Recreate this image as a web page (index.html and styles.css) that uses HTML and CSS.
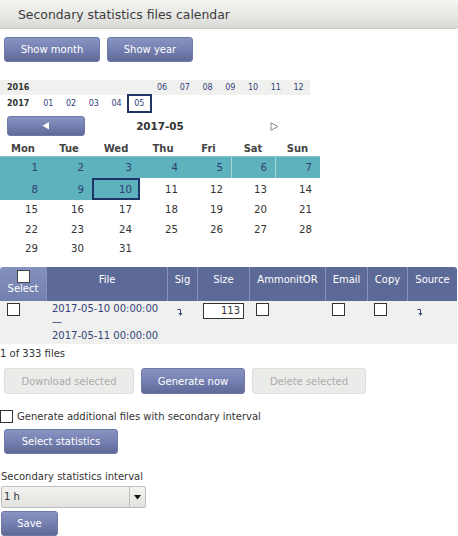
FILE: index.html
```html
<!DOCTYPE html>
<html lang="en">
<head>
<meta charset="utf-8">
<title>Secondary statistics files calendar</title>
<link rel="stylesheet" href="styles.css">
</head>
<body>
<div class="title">Secondary statistics files calendar</div>

<div class="view-btns">
  <button class="btn btn-month">Show month</button>
  <button class="btn btn-year">Show year</button>
</div>

<div class="months">
  <div class="mrow alt">
    <span class="yr">2016</span>
    <span></span><span></span><span></span><span></span><span></span>
    <a class="m">06</a><a class="m">07</a><a class="m">08</a><a class="m">09</a><a class="m">10</a><a class="m">11</a><a class="m">12</a>
  </div>
  <div class="mrow cur">
    <span class="yr">2017</span>
    <a class="m">01</a><a class="m">02</a><a class="m">03</a><a class="m">04</a><a class="m sel">05</a>
  </div>
</div>

<div class="nav">
  <div class="nav-cell"><button class="btn nav-btn"><svg width="8" height="8" viewBox="0 0 8 8"><polygon points="7,0 7,7.5 0.5,3.75" fill="#fff"/></svg></button></div>
  <div class="nav-title">2017-05</div>
  <div class="nav-cell"><svg width="9" height="9" viewBox="0 0 9 9"><polygon points="1,0.8 1,8.2 8,4.5" fill="none" stroke="#8a8a8a" stroke-width="1"/></svg></div>
</div>

<table class="cal">
  <colgroup><col class="c46"><col class="c46"><col class="c48"><col class="c46"><col class="c45"><col class="c44"><col class="c45"></colgroup>
  <thead>
    <tr><th>Mon</th><th>Tue</th><th>Wed</th><th>Thu</th><th>Fri</th><th>Sat</th><th>Sun</th></tr>
  </thead>
  <tbody>
    <tr class="r-tall first">
      <td class="has">1</td><td class="has">2</td><td class="has">3</td><td class="has">4</td><td class="has">5</td><td class="has sep">6</td><td class="has sep">7</td>
    </tr>
    <tr class="r-tall">
      <td class="has">8</td><td class="has">9</td><td class="has today">10</td><td>11</td><td>12</td><td>13</td><td>14</td>
    </tr>
    <tr class="r"><td>15</td><td>16</td><td>17</td><td>18</td><td>19</td><td>20</td><td>21</td></tr>
    <tr class="r"><td>22</td><td>23</td><td>24</td><td>25</td><td>26</td><td>27</td><td>28</td></tr>
    <tr class="r"><td>29</td><td>30</td><td>31</td><td></td><td></td><td></td><td></td></tr>
  </tbody>
</table>

<table class="ft">
  <colgroup>
    <col class="w-sel"><col class="w-file"><col class="w-sig"><col class="w-size"><col class="w-amm"><col class="w-mail"><col class="w-copy"><col class="w-src">
  </colgroup>
  <thead>
    <tr>
      <th class="th-sel"><input type="checkbox" class="cb cb-head"><div>Select</div></th>
      <th>File</th>
      <th>Sig</th>
      <th>Size</th>
      <th>AmmonitOR</th>
      <th>Email</th>
      <th>Copy</th>
      <th>Source</th>
    </tr>
  </thead>
  <tbody>
    <tr>
      <td class="td-cb"><input type="checkbox" class="cb"></td>
      <td class="td-file"><a>2017-05-10 00:00:00</a><br><a>—</a><br><a>2017-05-11 00:00:00</a></td>
      <td class="td-ico"><svg width="6" height="8" viewBox="0 0 6 8"><path d="M0.5 1.5 H3.5 V5.5" fill="none" stroke="#33427a" stroke-width="1"/><polygon points="1.5,5 5.5,5 3.5,7.8" fill="#33427a"/></svg></td>
      <td class="td-size"><input class="size" type="text" value="113"></td>
      <td class="td-cb"><input type="checkbox" class="cb"></td>
      <td class="td-cb"><input type="checkbox" class="cb"></td>
      <td class="td-cb"><input type="checkbox" class="cb"></td>
      <td class="td-ico"><svg width="6" height="8" viewBox="0 0 6 8"><path d="M0.5 1.5 H3.5 V5.5" fill="none" stroke="#33427a" stroke-width="1"/><polygon points="1.5,5 5.5,5 3.5,7.8" fill="#33427a"/></svg></td>
    </tr>
  </tbody>
</table>

<div class="count">1 of 333 files</div>

<div class="actions">
  <button class="btn btn-dis btn-dl" disabled>Download selected</button>
  <button class="btn btn-gen">Generate now</button>
  <button class="btn btn-dis btn-del" disabled>Delete selected</button>
</div>

<label class="check-row"><input type="checkbox" class="cb"><span>Generate additional files with secondary interval</span></label>

<button class="btn btn-stats">Select statistics</button>

<div class="field-label">Secondary statistics interval</div>
<div class="select"><span class="select-val">1 h</span><span class="select-arrow"><svg width="7" height="5" viewBox="0 0 7 5"><polygon points="0,0 7,0 3.5,4.5" fill="#111"/></svg></span></div>

<button class="btn btn-save">Save</button>
</body>
</html>
```

FILE: styles.css
```css
* { box-sizing: border-box; }

body {
  margin: 0;
  font-family: "DejaVu Sans", "Liberation Sans", sans-serif;
  font-size: 10px;
  color: #333;
  background: #fff;
}

a { color: #33427a; text-decoration: none; }

.title {
  height: 29px;
  line-height: 30px;
  padding-left: 18px;
  font-size: 12.4px;
  color: #3c3c3c;
  background: linear-gradient(#f4f4f2, #e6e6e3 60%, #d9d9d5);
  border-bottom: 1px solid #cacac6;
  border-radius: 0 3px 3px 0;
}

.btn {
  display: inline-flex;
  align-items: center;
  justify-content: center;
  height: 25px;
  padding: 0 4px;
  margin: 0;
  white-space: nowrap;
  font-family: inherit;
  font-size: 10px;
  color: #fff;
  background: linear-gradient(#8a94c2, #7580b1 50%, #5f6a98);
  border: 1px solid #6e79a7;
  border-radius: 3px;
}

.view-btns {
  display: flex;
  gap: 7px;
  margin: 8px 0 0 4px;
}
.btn-month { width: 96px; }
.btn-year { width: 86px; }

.months {
  margin-top: 18px;
  width: 310px;
}
.mrow {
  display: grid;
  grid-template-columns: 37px repeat(12, 22.75px);
  font-size: 8px;
}
.mrow.alt { height: 15px; line-height: 15px; background: #f0f1ee; }
.mrow.cur { height: 17px; line-height: 17px; }
.yr { font-weight: bold; padding-left: 7px; color: #333; }
.m { text-align: center; color: #33427a; }
.m.sel { outline: 2px solid #1f3568; outline-offset: -1px; }

.nav {
  display: grid;
  grid-template-columns: 92px 136px 92px;
  align-items: center;
  margin-top: 4px;
  height: 20px;
}
.nav-cell { display: flex; justify-content: center; align-items: center; }
.nav-btn { width: 78px; height: 20px; padding: 0; }
.nav-title { text-align: center; font-weight: bold; font-size: 10.4px; color: #333; }

.cal {
  margin-top: 4px;
  width: 320px;
  table-layout: fixed;
  border-collapse: collapse;
  border-spacing: 0;
  font-size: 10.2px;
}
.c46 { width: 46px; }
.c48 { width: 48px; }
.c45 { width: 45px; }
.c44 { width: 44px; }
.cal th {
  height: 16px;
  padding: 0;
  font-weight: bold;
  font-size: 10px;
  color: #444;
  text-align: center;
}
.cal td {
  padding: 0 8px 0 0;
  text-align: right;
  color: #333;
}
.cal .r-tall td { height: 22px; }
.cal .r td { height: 19.5px; }
.cal td.has { background: #5eb2bd; color: #2e3d74; }
.cal .first td { box-shadow: inset 0 1px 0 #84c4cc; }
.cal .first td.sep { box-shadow: inset 0 1px 0 #84c4cc, inset 1px 0 0 #a9d5db; }
.cal td.today { box-shadow: inset 0 0 0 2px #1d3566; }

.ft {
  margin-top: 8px;
  width: 457px;
  table-layout: fixed;
  border-collapse: separate;
  border-spacing: 0;
}
.w-sel { width: 46px; }
.w-file { width: 121px; }
.w-sig { width: 30px; }
.w-size { width: 52px; }
.w-amm { width: 76px; }
.w-mail { width: 42px; }
.w-copy { width: 40px; }
.w-src { width: 50px; }

.ft thead tr { height: 34px; }
.ft th {
  padding: 7px 0 0;
  vertical-align: top;
  font-weight: normal;
  line-height: 12px;
  color: #fff;
  background: #5d6a98;
  border-left: 1px solid #8691bc;
  text-align: center;
}
.ft th:first-child { border-left: none; border-top-left-radius: 3px; }
.ft th:last-child { border-top-right-radius: 3px; }
.ft th.th-sel {
  padding-top: 3px;
  background: linear-gradient(#8490bd, #7380ae);
}

.cb {
  appearance: none;
  -webkit-appearance: none;
  display: block;
  width: 13px;
  height: 13px;
  margin: 0;
  background: #fff;
  border: 1px solid #333;
}
.cb-head { margin: 0 auto; border-color: #444; }

.ft td {
  vertical-align: top;
  background: #f0f1ee;
  padding: 2px 0 0 7px;
}
.ft td.td-file {
  padding: 1px 0 2px 6px;
  line-height: 13.5px;
}
.ft td.td-ico { padding: 7px 0 0 10px; }
.ft td.td-ico svg { display: block; }
.ft td.td-size { padding-left: 6px; }
.size {
  display: block;
  width: 41px;
  height: 16px;
  margin: 0;
  padding: 0 3px;
  font-family: inherit;
  font-size: 10px;
  color: #333;
  text-align: right;
  border: 1px solid #333;
  background: #fff;
}

.count {
  margin-top: 3px;
  line-height: 14px;
}

.actions {
  display: flex;
  gap: 7px;
  margin: 7px 0 0 4px;
}
.actions .btn { height: 26px; }
.btn-dl { width: 130px; }
.btn-gen { width: 104px; }
.btn-del { width: 114px; }
.btn-dis {
  background: #ebebe9;
  border-color: #dededa;
  color: #ababab;
}

.check-row {
  display: flex;
  align-items: center;
  gap: 4px;
  margin-top: 16px;
  height: 13px;
  line-height: 13px;
}

.btn-stats {
  display: flex;
  margin: 6px 0 0 4px;
  width: 114px;
}

.field-label {
  margin: 16px 0 0 1px;
  line-height: 14px;
}

.select {
  display: flex;
  margin: 2px 0 0 1px;
  width: 145px;
  height: 22px;
  border: 1px solid #bdbdb9;
  border-radius: 2px;
  background: linear-gradient(#f3f3f1, #e2e2df);
}
.select-val {
  flex: 1;
  line-height: 20px;
  padding-left: 2px;
  color: #333;
}
.select-arrow {
  width: 16px;
  display: flex;
  align-items: center;
  justify-content: center;
  border-left: 1px solid #bdbdb9;
}

.btn-save {
  display: flex;
  margin: 3px 0 0 1px;
  width: 57px;
}
```
